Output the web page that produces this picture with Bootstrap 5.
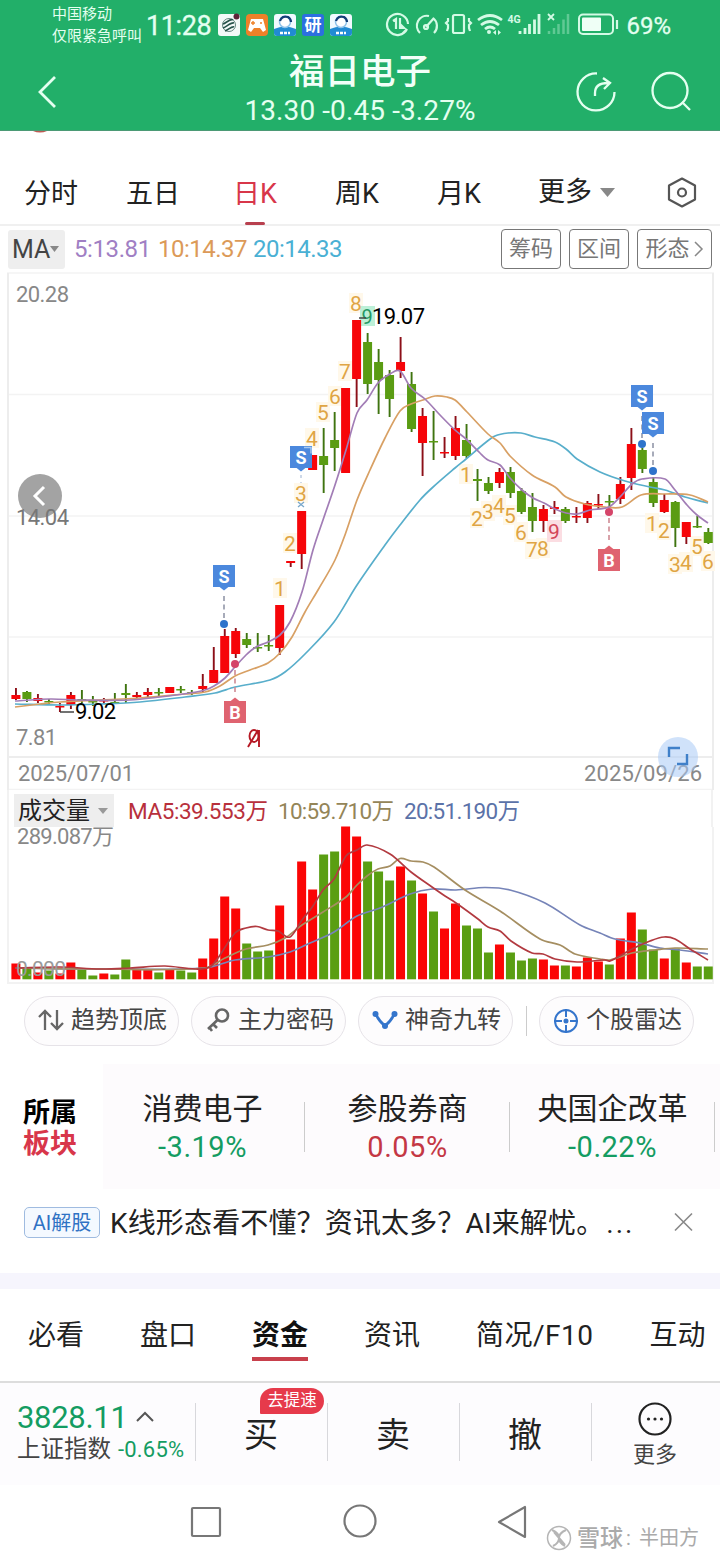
<!DOCTYPE html>
<html lang="zh-CN">
<head>
<meta charset="utf-8">
<meta name="viewport" content="width=device-width, initial-scale=1">
<title>福日电子</title>
<link href="https://cdn.jsdelivr.net/npm/bootstrap@5.3.0/dist/css/bootstrap.min.css" rel="stylesheet">
<style>
body{width:720px;height:1560px;overflow:hidden;background:#fff;color:#222;font-family:Roboto,"Noto Sans CJK SC",sans-serif;line-height:1;white-space:nowrap}
svg{display:block;flex:none}
svg text{font-family:Roboto,"Noto Sans CJK SC",sans-serif}
.app-head{height:131px;background:#22af69;color:#e4fff0;border-bottom:1px solid #4b9a75}
.status{height:47px;padding:2px 49px 0 52px}
.carrier{font-size:15px;line-height:22px;width:94px}
.clock{font-size:27px;width:72px;letter-spacing:-.4px;padding-top:3px;-webkit-text-stroke:.3px}
.power{font-size:24px;margin-left:6px;padding-top:2px;-webkit-text-stroke:.3px}
.titlebar{height:83px;padding:7px 26px 0 37px}
.title-text{padding-left:89px}
.stock-name{font-size:35.5px;font-weight:500;line-height:42px;color:#f2fff8;margin-top:-4px}
.stock-quote{font-size:28px;line-height:36px;letter-spacing:.1px}
.gap-strip{height:29px}
.period{height:66px;border-bottom:2px solid #f0f0f0;font-size:27px}
.period>div{width:102px;text-align:center;line-height:68px}
.on-red{color:#d8364a}
.period .on-red::after{content:"";display:block;width:20px;height:3px;border-radius:2px;background:#b8404e;margin:-6px auto 0}
.ma-row{height:46px;padding:0 8px;font-size:24px}
.ma-pick{width:57px;height:39px;background:#eee;border-radius:3px;font-size:25px;color:#444;padding-left:4px}
.tool{height:40px;border:1px solid #777;border-radius:4px;color:#777;font-size:22px;background:#fff}
.vol-head{height:37px;margin:0 7px;border-left:2px solid #f2f2f2;border-right:2px solid #f2f2f2;padding-left:5px;font-size:22px}
.vol-pick{width:100px;height:33px;background:#eee;font-size:24px;padding-left:4px}
.pills{height:73px;padding:0 24px;color:#444}
.pill{width:155px;height:50px;border:1px solid #e6e3e8;border-radius:25px;font-size:24px;background:#fdfcfd;padding:0 0 2px 13px;gap:7px;flex:none}
.pill-rule{width:1px;height:30px;background:#ccc;margin:0 0 0 1px}
.sector{height:125px;margin-top:7px}
.sector-tag{width:103px;font-size:27px;font-weight:700;line-height:31px;padding:4px 0 0 23px}
.sector-list{background:#fdfbfd;flex:1;padding-top:24px}
.sector-item{width:205px;text-align:center;position:relative;height:72px;flex:none;left:-3px}
.sector-item::after{content:"";position:absolute;right:0;top:14px;height:50px;width:1px;background:#ccc}
.sector-item b{display:block;font-weight:400;font-size:30px;line-height:42px}
.sector-item span{font-size:29px;line-height:34px;letter-spacing:.5px}
.fall{color:#149c62}
.ai{height:84px;padding:18px 26px 0 24px;font-size:28px}
.ai-tag{width:76px;height:31px;border:1px solid #9fbbe0;border-radius:5px;color:#2f72c4;background:#f4f9ff;font-size:20px}
.ai-line{margin-left:10px;padding-top:3px;letter-spacing:.15px}
.ai-line span{letter-spacing:2px;margin-left:2px}
.band{height:16px;background:#f6f5fd}
.info-tabs{height:94px;padding:14px 0 0 28px;gap:56px;font-size:28px;border-bottom:2px solid #ddd}
.info-tabs>div{height:64px;line-height:66px;flex:none}
.info-tabs .sel{font-weight:700;color:#111;border-bottom:4px solid #c8404c;height:58px}
.trade{height:102px;background:#fdfcfe}
.trade-index{width:195px;padding:15px 0 0 17px}
.trade-btn{width:132px;position:relative;font-size:34px;padding-top:1px}
.trade-btn::before,.trade-more::before{content:"";position:absolute;left:0;top:20px;width:1px;height:58px;background:#d8d8dc}
.trade-more{width:128px;position:relative;padding-top:18px;font-size:22px;color:#444;gap:7px}
.speed{position:absolute;left:65px;top:5px;width:64px;height:26px;background:#e63a4b;color:#fff;font-size:16.5px;border-radius:13px 13px 13px 1px}
.sys{height:74px}
</style>
</head>
<body>
<header class="app-head">
  <div class="status d-flex align-items-center">
    <div class="carrier">中国移动<br>仅限紧急呼叫</div>
    <div class="clock">11:28</div>
    <svg width="136" height="24" viewBox="218 12 136 24">
      <rect x="218" y="13" width="22" height="22" rx="3" fill="#f3faf8"/><g fill="none" stroke="#27534b" stroke-width="1.6"><path d="M223 23c3-1 8-6 10-4M223 27c3-1 8-6 11-5M225 30c3-1 7-5 9-4"/><circle cx="229" cy="24" r="6.5" stroke-width=".7"/></g><circle cx="236.5" cy="15.5" r="3" fill="#5e2438"/>
      <rect x="246" y="13" width="22" height="22" rx="4" fill="#ee8129"/><path d="M251 18h12l3 11-3 2-3-4h-6l-3 4-3-2z" fill="#fff"/><path d="M251 22h4m-2-2v4m7-2h2" stroke="#ee8129" stroke-width="1.4"/>
      <g id="assist"><rect x="274" y="13" width="22" height="22" rx="3" fill="#f1faff"/><path d="M274 28q11-5 22 0v4q0 3-3 3h-16q-3 0-3-3z" fill="#218bd4"/><circle cx="285" cy="21" r="5.500" fill="#fff" stroke="#8fc3ea" stroke-width="1.500"/><path d="M280 20q2-6 8-4 3 2 3 5" stroke="#123e77" stroke-width="2.200" fill="none"/><path d="M280 32h10" stroke="#fff" stroke-width="2.500" stroke-dasharray="3 1"/></g>
      <rect x="302" y="13" width="22" height="22" rx="3" fill="#2c6fe0"/><text x="304.500" y="30" font-size="17" font-weight="700" fill="#fff">研</text>
      <use href="#assist" x="56"/>
    </svg>
    <svg class="ms-auto" width="236" height="26" viewBox="386 12 236 26" fill="none" stroke="#d4fae5" stroke-width="2.200">
      <path d="M409 29A10.500 10.500 0 1 1 410 24M395 21l3-2v10m4-11v10h4l-4-4M404 34l5-5"/>
      <path d="M422 33a10 10 0 0 1 9-17M435 18a10 10 0 0 1 1 15M428 27l8-9"/><circle cx="428" cy="27" r="2"/>
      <rect x="455" y="15" width="11" height="18" rx="1.500"/><path d="M450 18v3l-2 2 2 2v3l-1 3M471 18v3l2 2-2 2v3l1 3"/>
      <path d="M480 20q12-9 24 0M483 25q9-7 18 0M487 29q5-4 10 0" stroke-width="2.800"/><circle cx="491" cy="32" r="2" fill="#d4fae5" stroke="none"/><path d="M498 30v5l-3-2.500zM500 30v5l3-2.500z" fill="#d4fae5" stroke="none"/>
      <text x="509.500" y="22.500" font-size="10.500" font-weight="700" fill="#d4fae5" stroke="none">4G</text>
      <path d="M522 31v3M527 28v6M531.500 24v10M536.500 19.500v14.500M541 14v20" stroke-width="2.800"/>
      <path d="M550 14l6 6m0-6l-6 6" stroke-width="1.800"/><path d="M551 31v3M556 28v6M560.500 24v10M565.500 19.500v14.500M570 14v20" stroke-width="2.500" opacity=".35"/>
      <rect x="581" y="14.500" width="34" height="19.500" rx="4" stroke-width="2"/><rect x="584" y="17.500" width="19" height="13.500" rx="1" fill="#effff6" stroke="none"/><path d="M619 20v9"/>
    </svg>
    <div class="power">69%</div>
  </div>
  <div class="titlebar d-flex align-items-center">
    <svg width="20" height="34" viewBox="0 0 20 34"><path d="M18 2L3 17l15 15" stroke="#e4fff0" stroke-width="2.800" fill="none"/></svg>
    <div class="title-text flex-grow-1 text-center"><div class="stock-name">福日电子</div><div class="stock-quote">13.30 -0.45 -3.27%</div></div>
    <svg width="120" height="44" viewBox="574 70 120 44" fill="none" stroke="#e4fff0" stroke-width="2.300"><path d="M597 73.500A18.500 18.500 0 1 0 614.500 92M595 96v-3q0-10 13-10M603 78l7 5-6 6"/><circle cx="670" cy="90.500" r="17.500"/><path d="M682 102l8 8"/></svg>
  </div>
</header>
<div class="gap-strip"><svg width="60" height="4"><path d="M33 0h14q-7 3-14 0z" fill="#bd5a52"/></svg></div>
<nav class="period d-flex">
  <div>分时</div><div>五日</div><div class="on-red">日K</div><div>周K</div><div>月K</div>
  <div class="d-flex align-items-center ps-4 ms-1">更多<svg width="15" height="9" class="ms-2"><path d="M0 0h15l-7.500 9z" fill="#888"/></svg></div>
  <svg class="ms-auto mt-3" style="margin-right:22px" width="32" height="34" viewBox="0 0 32 34" fill="none" stroke="#555" stroke-width="2.200"><path d="M16 2.500l13 7v14l-13 7-13-7v-14z" stroke-linejoin="round"/><circle cx="16" cy="16.500" r="4"/></svg>
</nav>
<div class="ma-row d-flex align-items-center">
  <div class="ma-pick d-flex align-items-center">MA<svg width="9" height="6" class="ms-0"><path d="M0 0h9l-4.500 6z" fill="#888"/></svg></div>
  <div style="color:#a07fc4;margin-left:9px;width:84px;letter-spacing:-.4px">5:13.81</div><div style="color:#dc9a58;width:95px;letter-spacing:-.5px">10:14.37</div><div style="color:#4ab0d4;letter-spacing:-.5px">20:14.33</div>
  <div class="d-flex gap-2 ms-auto">
    <div class="tool d-flex align-items-center justify-content-center" style="width:60px">筹码</div><div class="tool d-flex align-items-center justify-content-center" style="width:60px">区间</div>
    <div class="tool d-flex align-items-center justify-content-center" style="width:75px">形态<svg width="10" height="16" class="ms-1"><path d="M1 1l7 7-7 7" fill="none" stroke="#888" stroke-width="1.500"/></svg></div>
  </div>
</div>
<svg id="price" width="720" height="518" viewBox="0 272 720 518"></svg>
<div class="vol-head d-flex">
  <div class="vol-pick d-flex align-items-center mt-1">成交量<svg width="10" height="6" class="ms-2"><path d="M0 0h10l-5 6z" fill="#999"/></svg></div>
  <svg width="410" height="37" viewBox="114 790 410 37" font-size="22.500"><text x="128" y="818.500" textLength="140" fill="#b8303c">MA5:39.553万</text><text x="278" y="818.500" textLength="116" fill="#948558">10:59.710万</text><text x="404" y="818.500" textLength="116" fill="#5b72a8">20:51.190万</text></svg>
</div>
<svg id="volume" width="720" height="157" viewBox="0 827 720 157" overflow="visible"></svg>
<div class="pills d-flex align-items-center">
  <div class="pill d-flex align-items-center"><svg width="26" height="24" fill="none" stroke="#666" stroke-width="2.300"><path d="M7 22V3M1 9l6-6 6 6M19 2v19M13 15l6 6 6-6"/></svg>趋势顶底</div>
  <div class="pill d-flex align-items-center" style="margin:0 12px"><svg width="26" height="26" fill="none" stroke="#666" stroke-width="2.600"><circle cx="17" cy="8.500" r="6"/><path d="M12.500 13L3 22M8 17l4 4M4 20l3 4"/></svg>主力密码</div>
  <div class="pill d-flex align-items-center"><svg width="26" height="24" fill="none" stroke="#3475cc" stroke-width="2.800"><path d="M4 6q2 6 9 12 7-6 9-12"/><g fill="#3475cc" stroke="none"><circle cx="3.500" cy="6" r="3"/><circle cx="22.500" cy="6" r="3"/><circle cx="13" cy="18" r="3"/></g></svg>神奇九转</div>
  <div class="pill-rule ms-auto"></div>
  <div class="pill d-flex align-items-center" style="margin:0 2px 0 12px"><svg width="26" height="26" fill="none" stroke="#3475cc" stroke-width="2"><circle cx="13" cy="14" r="11"/><path d="M13 2v8M13 18v8M1 14h8M17 14h8"/><circle cx="13" cy="14" r="1.500" fill="#3475cc"/></svg>个股雷达</div>
</div>
<section class="sector d-flex overflow-hidden">
  <div class="sector-tag d-flex flex-column justify-content-center"><div class="text-black">所属</div><div class="on-red">板块</div></div>
  <div class="sector-list d-flex">
    <div class="sector-item"><b>消费电子</b><span class="fall">-3.19%</span></div><div class="sector-item"><b>参股券商</b><span style="color:#c43744">0.05%</span></div><div class="sector-item"><b>央国企改革</b><span class="fall">-0.22%</span></div>
  </div>
</section>
<div class="ai d-flex">
  <div class="ai-tag d-flex align-items-center justify-content-center">AI解股</div><div class="ai-line">K线形态看不懂？资讯太多？AI来解忧。<span>...</span></div>
  <svg class="ms-auto" width="20" height="30"><path d="M1 6.500l17 17M18 6.500L1 23.500" stroke="#888" stroke-width="1.600"/></svg>
</div>
<div class="band"></div>
<nav class="info-tabs d-flex"><div>必看</div><div>盘口</div><div class="sel">资金</div><div>资讯</div><div style="letter-spacing:.5px">简况/F10</div><div>互动</div></nav>
<footer class="trade d-flex">
  <div class="trade-index">
    <div class="d-flex align-items-center fall" style="font-size:31px;height:38px;letter-spacing:-.3px">3828.11<svg width="18" height="12" class="ms-2"><path d="M1 10l8-8 8 8" fill="none" stroke="#555" stroke-width="2"/></svg></div>
    <div class="d-flex align-items-center" style="height:28px;font-size:23.500px;color:#444">上证指数<span class="fall" style="font-size:22px;margin-left:7px;letter-spacing:.2px">-0.65%</span></div>
  </div>
  <div class="trade-btn d-flex align-items-center justify-content-center">买<span class="speed d-flex align-items-center justify-content-center">去提速</span></div>
  <div class="trade-btn d-flex align-items-center justify-content-center">卖</div>
  <div class="trade-btn d-flex align-items-center justify-content-center">撤</div>
  <div class="trade-more d-flex flex-column align-items-center"><svg width="36" height="36"><circle cx="18" cy="18" r="15.500" fill="none" stroke="#222" stroke-width="2.200"/><g fill="#222"><circle cx="11.500" cy="18" r="1.600"/><circle cx="18" cy="18" r="1.600"/><circle cx="24.500" cy="18" r="1.600"/></g></svg><div>更多</div></div>
</footer>
<div class="sys"><svg width="720" height="76" viewBox="0 1485 720 76" fill="none" stroke="#777" stroke-width="2.200">
  <rect x="192" y="1508" width="28" height="28" rx="1"/><circle cx="360" cy="1521" r="15.500"/><path d="M525 1507v30l-26-15z" stroke-linejoin="round"/>
  <g stroke="#b5b5b5" stroke-width="1.500"><circle cx="559" cy="1538" r="11.500"/><path d="M552 1530q7 3 7 8t-6 8M566 1530q-7 3-7 8t6 8M554 1532l11 13" stroke-width="2"/></g>
  <g fill="#aaa" stroke="none"><text x="577" y="1546" font-size="23" font-weight="500">雪球</text><text x="626" y="1545" font-size="20">:</text><text x="639" y="1545" font-size="20">半田方</text></g>
</svg></div>
<script>
// Each row: colour, high, low, body top, body bottom, volume top
const K=`r688,700,695,699,963 g691,702,692,699,968 r694,703,698,701,972 g699,704,701,702,970 r703,712,706,707,973 r692,709,695,705,962 g690,703,699,700,969 g696,706,701,702,975 r698,704,700,701,973 g693,704,702,703,974 g684,703,693,695,959 r692,698,695,697,969 r688,699,692,695,969 g688,697,692,693,972 r687,693,687,693,969 g686,693,689,690,970 g690,695,692,693,972 r674,692,686,689,958 r647,683,670,683,938 r629,673,636,673,896 r628,658,631,654,908 g633,648,639,645,943 g633,652,647,648,951 g635,651,645,646,950 r605,655,605,648,905 r561,567,561,563,939 r511,569,511,554,861 r455,470,455,470,889 g428,493,456,465,854 g412,471,440,448,851 r388,473,388,473,826 r320,407,320,379,836 g333,394,342,384,861 g349,414,362,380,871 g370,417,375,399,880 r337,378,362,371,866 g372,432,384,429,880 r408,476,416,443,893 g411,460,441,442,911 r437,458,452,453,928 r416,460,428,456,903 g424,458,440,456,925 g469,501,479,481,928 g477,494,483,491,952 r468,488,472,483,944 g467,498,472,493,952 g488,514,491,512,960 g493,532,507,521,958 r505,532,509,521,959 r501,514,507,509,965 g507,523,509,521,965 r507,523,516,517,966 r501,523,503,518,957 r494,509,504,505,961 g495,507,501,502,964 r477,504,484,499,938 r428,490,444,478,912 g448,473,450,469,929 g477,507,482,503,949 r494,513,500,512,958 g501,547,502,528,948 r522,544,522,537,962 g516,528,526,527,966 g528,544,532,543,966`.split(' ');
// Moving averages: rounded through each point so the curve stays smooth
const path=(p,c,w=1.7)=>{const q=p.split(' ').map(s=>s.split(',').map(Number));let d=`M${q[0]}`;
 for(let i=0;i<q.length-1;i++){const [p0,p1,p2,p3]=[q[i-1]||q[i],q[i],q[i+1],q[i+2]||q[i+1]],t=(p2[0]-p1[0])/3,
  m1=(p2[1]-p0[1])/(p2[0]-p0[0]||1),m2=(p3[1]-p1[1])/(p3[0]-p1[0]||1);
  d+=`C${p1[0]+t} ${p1[1]+m1*t} ${p2[0]-t} ${p2[1]-m2*t} ${p2}`;}
 return `<path d="${d}" fill="none" stroke="${c}" stroke-width="${w}"/>`};
const label=(x,y,s,c,size,w)=>`<text x="${x}" y="${y}" fill="${c}" font-size="${size}" ${w?`textLength="${w}"`:''}>${s}</text>`;
let a='<path d="M7 273H714M8 394.500H713M8 516H713M8 637H713M8 789.500H713" stroke="#f3f3f3" stroke-width="1.500"/><path d="M8 273V790M713 273V790M8 757H713" stroke="#ededed" stroke-width="2" fill="none"/>';
let v='<path d="M8 827V983H713V827" fill="none" stroke="#f2f2f2" stroke-width="2"/>'+label(17,844,'289.087万','#888',22,97);
const days=[[280,588,1],[290,543,2],[301,493,3],[312,438,4],[323,412,5],[335,396,6],[345,371,7],[356,303,8],[466,474,1],[477,518,2],[488,511,3],[499,505,4],[510,515,5],[521,532,6],[532,549,7],[543,548,8],[652,523,1],[664,530,2],[675,564,3],[686,562,4],[697,546,5],[708,561,6]];
days.forEach(([x,y])=>a+=`<rect x="${x-7}" y="${y-10}" width="14" height="20" fill="#fff8ea"/>`);
a+='<rect x="547" y="520" width="15" height="22" fill="#fbdde2"/><rect x="360" y="306" width="15" height="20" fill="#bdf0d8"/>';
K.forEach((s,i)=>{const r=s[0]=='r',x=15.9+10.99*i,[h,l,t,b,n]=s.slice(1).split(',').map(Number);
 a+=`<rect x="${x-.9}" y="${h}" width="1.900" height="${l-h}" fill="${r?'#8c0f18':'#3f7410'}"/><rect x="${x-4.5}" y="${t}" width="9" height="${Math.max(b-t,1.5)}" fill="${r?'#f60509':'#5a9c13'}"/>`;
 v+=`<rect x="${x-4.500}" y="${n+.5}" width="9" height="${978.8-n}" fill="${r?'#fb0505':'#5a9e12'}"/>`;});
a+=path('15,704 60,705 100,704 140,702 185,697 215,693 235,687 270,680 285,672 305,654 334,622 357,585 385,545 400,525 420,500 432,488 455,468 466,459 485,443 495,436 508,433 521,433 535,437 555,442 566,449 577,459 600,472 625,481 650,487 665,490 685,497 708,503','#58aecb');
a+=path('15,707 40,704 60,702 140,698 185,694 205,692 220,686 235,676 250,670 268,663 280,653 292,637 305,612 318,590 335,560 345,535 357,500 370,470 385,438 400,411 411,404 423,400 435,396 447,397 455,400 467,412 488,434 500,443 510,456 532,475 555,487 566,497 585,504 605,507 622,507 641,495 665,494 690,495 708,502','#d8a064');
a+=path('15,701 50,699 80,700 130,700 160,697 190,693 205,690 214,686 225,678 235,667 246,655 256,647 268,642 280,635 290,622 302,592 313,550 323,520 335,485 346,450 357,413 367,400 378,383 390,374 400,371 411,388 425,399 440,415 455,430 466,439 480,453 488,460 500,465 510,478 522,490 533,498 544,503 555,509 566,513 577,514 590,510 609,507 620,497 632,484 642,479 665,479 675,490 687,505 697,515 708,523','#a27db6');
days.forEach(([x,y,n])=>a+=`<text x="${x}" y="${y+7.5}" text-anchor="middle" font-size="21" fill="#dfa544">${n}</text>`);
a+='<text x="554" y="538.500" text-anchor="middle" font-size="21" fill="#d34658">9</text><text x="367" y="324" text-anchor="middle" font-size="20" fill="#259965">9</text>';
const mark=(x,y,k,d)=>{const c=k=='S'?'#4b88dd':'#df6370',dc=k=='S'?'#2e73cb':'#d54469',s=k=='S'?1:-1;
 if(d)a+=`<path d="M${x} ${y+s*20}V${d}" stroke="${k=='S'?'#9297a8':'#cf8b94'}" stroke-width="1.600" stroke-dasharray="5 3.500"/><circle cx="${x}" cy="${d}" r="4" fill="${dc}"/>`;
 a+=`<rect x="${x-11}" y="${y-11}" width="22" height="22" fill="${c}"/><path d="M${x-5} ${y+s*10.5}h10l-5 ${s*4}z" fill="${c}"/><text x="${x}" y="${y+6.500}" text-anchor="middle" font-size="18" font-weight="700" fill="#fff">${k}</text>`};
mark(224,576,'S',624);mark(301,457,'S');mark(642,396,'S',444);mark(653,423,'S',471);mark(235,712,'B',664);mark(609,560,'B',512);
a+='<path d="M304 447.500h7v6" fill="none" stroke="#a7c9ef" stroke-width="1.500"/><path d="M301 475v8" stroke="#9bb1d0" stroke-dasharray="3 4"/><path d="M298 502l6 5m0-5l-6 5" stroke="#78a7cb" stroke-width="1.300"/>';
a+='<path d="M359 318h7M60 712h14" stroke="#444" stroke-width="1.500"/>'+label(372,324,'19.07','#000',22,53)+label(75,719,'9.02','#000',22,41)+label(16,745,'7.81','#888',22,41)+label(18,781,'2025/07/01','#888',22,116)+label(584,781,'2025/09/26','#888',22,118)+label(16,302,'20.28','#888',22,53);
a+='<g fill="none" stroke="#b61824" stroke-width="1.900"><ellipse cx="254" cy="736" rx="4.500" ry="6"/><path d="M248 747l10-17M259 730v17"/></g>';
a+='<circle cx="40" cy="496" r="22" fill="#a3a3a3"/><path d="M44 487l-9 9 9 9" fill="none" stroke="#fff" stroke-width="3"/>'+label(16,525,'14.04','#777',22,53);
a+='<circle cx="678" cy="757" r="20" fill="#a9caf6" opacity=".55"/><path d="M669 757v-9h11M687 754v10h-10" fill="none" stroke="#3f80c9" stroke-width="2.400"/>';
v+=path('15,968 100,969 205,968 235,960 268,957 290,952 310,943 334,932 357,916 380,908 410,894 432,889 456,890 485,887.5 510,890 545,903 580,925 600,933 615,939 640,943 660,948 680,950 708,954','#7684b8');
v+=path('15,968 100,969 205,968 225,958 246,949 268,945 285,938 302,925 323,912 346,897 357,885 367,876 378,869 390,866 400,858.5 411,861 423,862 434,867 465,890 500,911 540,939 560,945 575,954 600,959 610,960 632,953 655,950 675,948 708,949','#a58e61');
v+=path('15,968 60,967 100,969 130,968 165,966 195,969 210,967 218,958 235,933 246,928 257,926.5 268,930 278,931 290,937 302,920 313,906 323,890 334,879 346,856 357,850 367,845 390,854 411,872 432,887 445,896 456,903 478,919 488,927 500,931 511,941 532,953 543,954 555,959 577,962 605,960 610,961 632,949 650,941 664,937 675,939 690,949 708,960','#b23a40');
v+=label(16,976,'0.000','#9a9a9a',21,50);
document.getElementById('price').innerHTML=a;document.getElementById('volume').innerHTML=v;
</script>
<script src="https://cdn.jsdelivr.net/npm/bootstrap@5.3.0/dist/js/bootstrap.bundle.min.js"></script>
</body>
</html>
